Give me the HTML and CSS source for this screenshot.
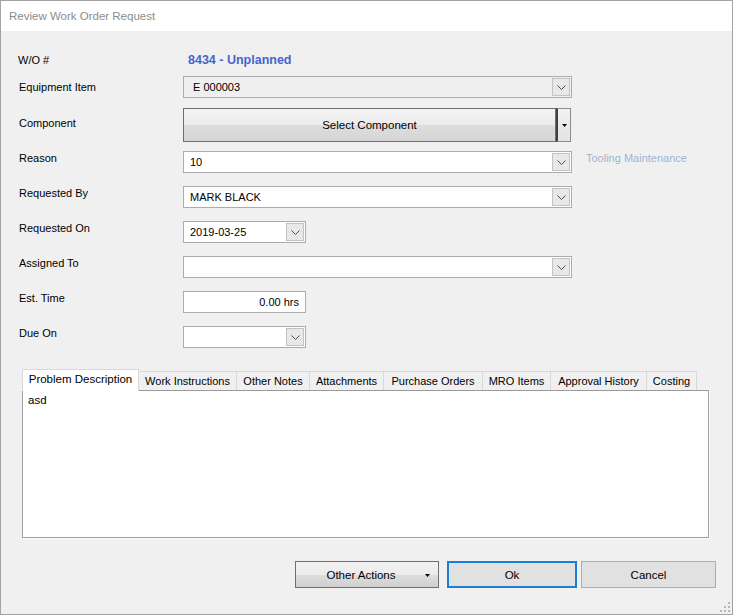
FILE: index.html
```html
<!DOCTYPE html>
<html>
<head>
<meta charset="utf-8">
<link rel="stylesheet" href="styles.css">
</head>
<body>
<div class="window">
  <div class="titlebar">Review Work Order Request</div>
  <div class="client">
    <div class="form">
      <div class="row row-wo">
        <span class="label label-wo">W/O #</span>
        <span class="wo-value">8434 - Unplanned</span>
      </div>
      <div class="row row-first">
        <span class="label label-center">Equipment Item</span>
        <div class="combo combo-wide combo-disabled">
          <span class="combo-text">E 000003</span>
          <span class="drop"><svg width="9" height="5" viewBox="0 0 9 5"><path d="M0.5 0.5 L4.5 4.5 L8.5 0.5" fill="none" stroke="#4d4d4d" stroke-width="1"/></svg></span>
        </div>
      </div>
      <div class="row row-comp">
        <span class="label label-comp">Component</span>
        <div class="split">
          <div class="split-main">Select Component</div>
          <div class="split-arrow"><svg width="5" height="3" viewBox="0 0 5 3"><path d="M0 0 H5 L2.5 3 Z" fill="#000"/></svg></div>
        </div>
      </div>
      <div class="row row-reason">
        <span class="label">Reason</span>
        <div class="combo combo-wide">
          <span class="combo-text">10</span>
          <span class="drop"><svg width="9" height="5" viewBox="0 0 9 5"><path d="M0.5 0.5 L4.5 4.5 L8.5 0.5" fill="none" stroke="#4d4d4d" stroke-width="1"/></svg></span>
        </div>
        <span class="hint">Tooling Maintenance</span>
      </div>
      <div class="row">
        <span class="label">Requested By</span>
        <div class="combo combo-wide">
          <span class="combo-text">MARK BLACK</span>
          <span class="drop"><svg width="9" height="5" viewBox="0 0 9 5"><path d="M0.5 0.5 L4.5 4.5 L8.5 0.5" fill="none" stroke="#4d4d4d" stroke-width="1"/></svg></span>
        </div>
      </div>
      <div class="row">
        <span class="label">Requested On</span>
        <div class="combo combo-short">
          <span class="combo-text">2019-03-25</span>
          <span class="drop"><svg width="9" height="5" viewBox="0 0 9 5"><path d="M0.5 0.5 L4.5 4.5 L8.5 0.5" fill="none" stroke="#4d4d4d" stroke-width="1"/></svg></span>
        </div>
      </div>
      <div class="row">
        <span class="label">Assigned To</span>
        <div class="combo combo-wide">
          <span class="combo-text"></span>
          <span class="drop"><svg width="9" height="5" viewBox="0 0 9 5"><path d="M0.5 0.5 L4.5 4.5 L8.5 0.5" fill="none" stroke="#4d4d4d" stroke-width="1"/></svg></span>
        </div>
      </div>
      <div class="row">
        <span class="label">Est. Time</span>
        <div class="textbox">0.00 hrs</div>
      </div>
      <div class="row">
        <span class="label">Due On</span>
        <div class="combo combo-short">
          <span class="combo-text"></span>
          <span class="drop"><svg width="9" height="5" viewBox="0 0 9 5"><path d="M0.5 0.5 L4.5 4.5 L8.5 0.5" fill="none" stroke="#4d4d4d" stroke-width="1"/></svg></span>
        </div>
      </div>
    </div>

    <div class="tabs">
      <div class="tab tab-active">Problem Description</div>
      <div class="tab">Work Instructions</div>
      <div class="tab">Other Notes</div>
      <div class="tab">Attachments</div>
      <div class="tab">Purchase Orders</div>
      <div class="tab">MRO Items</div>
      <div class="tab">Approval History</div>
      <div class="tab">Costing</div>
    </div>
    <div class="panel">
      <div class="panel-text">asd</div>
    </div>

    <div class="actions">
      <div class="btn btn-grad btn-other"><span>Other Actions</span><svg class="btn-caret" width="5" height="3" viewBox="0 0 5 3"><path d="M0 0 H5 L2.5 3 Z" fill="#000"/></svg></div>
      <div class="btn btn-ok">Ok</div>
      <div class="btn btn-cancel">Cancel</div>
    </div>
    <svg class="grip" width="10" height="10" viewBox="0 0 10 10">
      <rect x="8" y="0" width="2" height="2" fill="#b8b8b8"/>
      <rect x="4" y="4" width="2" height="2" fill="#b8b8b8"/>
      <rect x="8" y="4" width="2" height="2" fill="#b8b8b8"/>
      <rect x="0" y="8" width="2" height="2" fill="#b8b8b8"/>
      <rect x="4" y="8" width="2" height="2" fill="#b8b8b8"/>
      <rect x="8" y="8" width="2" height="2" fill="#b8b8b8"/>
    </svg>
  </div>
</div>
</body>
</html>
```

FILE: styles.css
```css
* { box-sizing: border-box; }
html, body { margin: 0; padding: 0; background: #ffffff; }
body {
  font-family: "Liberation Sans", Arial, sans-serif;
  font-size: 11px;
  color: #000;
}
.window {
  width: 733px;
  height: 615px;
  border: 1px solid #a3a3a3;
  display: flex;
  flex-direction: column;
  background: #f0f0f0;
}
.titlebar {
  height: 30px;
  flex: none;
  background: #ffffff;
  color: #8c8c8c;
  font-size: 11.5px;
  line-height: 30px;
  padding-left: 8px;
}
.client {
  position: relative;
  flex: 1;
  background: #f0f0f0;
  padding-top: 19px;
}
.form {
  padding-left: 17px;
  display: flex;
  flex-direction: column;
}
.row {
  display: flex;
  align-items: center;
  height: 22px;
  margin-top: 13px;
}
.row-wo { height: 20px; margin-top: 0; }
.row-first { margin-top: 6px; }
.row-comp { height: 34px; margin-top: 10px; }
.row-reason { margin-top: 9px; }
.label {
  width: 165px;
  flex: none;
  padding-left: 1px;
  padding-bottom: 8px;
}
.label-center { padding-bottom: 1px; }
.label-comp { padding-bottom: 4px; }
.label-wo { padding-left: 0; padding-bottom: 1px; }
.wo-value {
  color: #4466cc;
  font-weight: bold;
  font-size: 12.5px;
  padding-left: 5px;
}
.combo {
  height: 22px;
  border: 1px solid #acacac;
  background: #ffffff;
  display: flex;
  align-items: center;
  justify-content: space-between;
  padding: 0 1px 0 6px;
}
.combo-wide { width: 389px; }
.combo-short { width: 123px; }
.combo-disabled { background: #efefef; padding-left: 9px; }
.combo-text { white-space: nowrap; }
.drop {
  width: 18px;
  height: 18px;
  border: 1px solid #c3c3c3;
  background: #e8e8e8;
  display: flex;
  align-items: center;
  justify-content: center;
  padding-top: 1px;
}
.hint {
  color: #9fb4d2;
  margin-left: 14px;
  padding-bottom: 8px;
}
.split {
  display: flex;
  height: 34px;
  width: 388px;
}
.split-main {
  flex: 1;
  border: 1px solid #6f6f6f;
  background: linear-gradient(#f3f3f3 0%, #ececec 50%, #dddddd 51%, #d6d6d6 100%);
  display: flex;
  align-items: center;
  justify-content: center;
  font-size: 11.5px;
}
.split-arrow {
  width: 15px;
  border: 1px solid #8a8a8a;
  border-left: 2px solid #404040;
  background: linear-gradient(#f2f2f2, #e3e3e3);
  display: flex;
  align-items: center;
  justify-content: center;
}
.textbox {
  width: 123px;
  height: 22px;
  border: 1px solid #acacac;
  background: #ffffff;
  text-align: right;
  line-height: 20px;
  padding-right: 6px;
}
.tabs {
  display: flex;
  align-items: flex-end;
  margin-top: 20px;
  margin-left: 21px;
  height: 22px;
}
.tab {
  height: 19px;
  border: 1px solid #d9d9d9;
  border-left: none;
  border-bottom: none;
  background: #f0f0f0;
  line-height: 18px;
  text-align: center;
  white-space: nowrap;
}
.tab-active {
  height: 22px;
  background: #ffffff;
  border-left: 1px solid #d9d9d9;
  line-height: 19px;
  position: relative;
  top: 1px;
  z-index: 1;
  font-size: 11.5px;
}
.tab:nth-child(1) { width: 117px; }
.tab:nth-child(2) { width: 98px; }
.tab:nth-child(3) { width: 73px; }
.tab:nth-child(4) { width: 74px; }
.tab:nth-child(5) { width: 99px; }
.tab:nth-child(6) { width: 68px; }
.tab:nth-child(7) { width: 96px; }
.tab:nth-child(8) { width: 50px; }
.panel {
  margin-left: 21px;
  width: 687px;
  height: 148px;
  border: 1px solid #a0a0a0;
  border-top-color: #9a9a9a;
  background: #ffffff;
  box-shadow: 1px 1px 0 #fafafa;
}
.panel-text {
  padding: 3px 0 0 5px;
  font-size: 11.5px;
}
.actions {
  display: flex;
  justify-content: flex-end;
  margin-top: 23px;
  padding-right: 16px;
}
.btn {
  height: 27px;
  display: flex;
  align-items: center;
  justify-content: center;
  font-size: 11.5px;
}
.btn-grad {
  border: 1px solid #707070;
  background: linear-gradient(#f2f2f2 0%, #ebebeb 50%, #dddddd 51%, #cfcfcf 100%);
}
.btn-other {
  width: 144px;
  position: relative;
  padding-right: 12px;
}
.btn-caret {
  position: absolute;
  right: 8px;
  top: 12px;
}
.btn-ok {
  width: 130px;
  margin-left: 8px;
  border: 2px solid #1a7fd4;
  background: #e1e1e1;
}
.btn-cancel {
  width: 135px;
  margin-left: 4px;
  border: 1px solid #adadad;
  background: #e1e1e1;
}
.grip {
  position: absolute;
  right: 2px;
  bottom: 2px;
}
```
